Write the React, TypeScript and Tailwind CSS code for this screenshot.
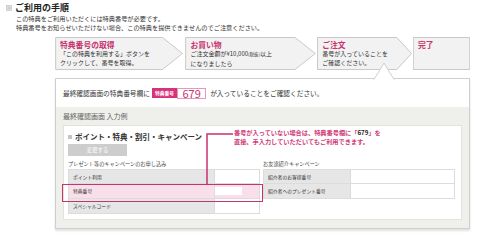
const PINK = "text-[#c8326f]";

function StepShape({ arrow }: { arrow: boolean }) {
  return (
    <svg className="absolute inset-0 w-full h-full" viewBox="0 0 100 33" preserveAspectRatio="none">
      <polygon
        points={arrow ? "0.5,0.5 84,0.5 99.5,16.5 84,32.5 0.5,32.5" : "0.5,0.5 99.5,0.5 99.5,32.5 0.5,32.5"}
        fill="#f2f2f2"
        stroke="#c9c9c9"
        strokeWidth="1"
        vectorEffect="non-scaling-stroke"
      />
    </svg>
  );
}

function Step({ w, title, lines, arrow = true }: { w: string; title: string; lines: React.ReactNode[]; arrow?: boolean }) {
  return (
    <div className={`relative h-[33px] shrink-0 ${w}`}>
      <StepShape arrow={arrow} />
      <div className="relative pl-[5px] pt-[3px]">
        <div className={`text-[7.8px] leading-[9px] font-bold ${PINK}`}>{title}</div>
        {lines.map((l, i) => (
          <div key={i} className="text-[6px] leading-[9px] text-[#333]">
            {l}
          </div>
        ))}
      </div>
    </div>
  );
}

export default function App() {
  return (
    <div
      className="w-[480px] h-[242px] overflow-hidden bg-white text-[#333]"
      style={{ fontFamily: '"Noto Sans CJK JP", "Noto Sans", sans-serif' }}
    >
      <div className="flex items-center gap-[3px] pl-[6px] pt-[2px]">
        <svg width="6" height="6" viewBox="0 0 6 6">
          <rect x="0.5" y="0.5" width="5" height="5" fill="#e6e6e6" stroke="#bbb" strokeWidth="0.6" />
          <line x1="1.5" y1="2.2" x2="4.5" y2="2.2" stroke="#aaa" strokeWidth="0.6" />
          <line x1="1.5" y1="3.8" x2="4.5" y2="3.8" stroke="#aaa" strokeWidth="0.6" />
        </svg>
        <h1 className="text-[9px] leading-[12px] font-bold text-[#222]">ご利用の手順</h1>
      </div>
      <div className="pl-[16px] text-[6.2px] leading-[9px] text-[#333]">
        <p>この特典をご利用いただくには特典番号が必要です。</p>
        <p>特典番号をお知らせいただけない場合、この特典を提供できませんのでご注意ください。</p>
      </div>

      <div className="ml-[55px] mt-[5px] flex w-[415px]">
        <Step w="w-[128px]" title="特典番号の取得" lines={["「この特典を利用する」ボタンを", "クリックして、番号を取得。"]} />
        <div className="w-[3px]" />
        <Step
          w="w-[131px]"
          title="お買い物"
          lines={[
            <span key="a">
              ご注文金額が¥10,000<span className="text-[4.5px]">(税抜)</span>以上
            </span>,
            "になりましたら",
          ]}
        />
        <div className="w-[1px]" />
        <Step w="w-[95px]" title="ご注文" lines={["番号が入っていることを", "ご確認ください。"]} />
        <div className="w-[1px]" />
        <Step w="w-[57px]" title="完了" lines={[]} arrow={false} />
      </div>

      <div className="relative ml-[55px] mt-[8px] w-[415px] border border-[#cfcfcf] shadow-[0_2px_2px_rgba(0,0,0,0.12)]">
        <svg className="absolute left-[317px] top-[-17px]" width="22" height="18" viewBox="0 0 22 18">
          <polygon points="1,17.5 11,1 21,17.5" fill="#ffffff" />
          <polyline points="1,17.5 11,1 21,17.5" fill="none" stroke="#cfcfcf" strokeWidth="1" />
        </svg>
        <div className="flex items-center h-[28px] pl-[7px] bg-white text-[6.7px]">
          <span>最終確認画面の特典番号欄に</span>
          <span className="ml-[2px] h-[10px] px-[3px] flex items-center bg-[#d6337a] text-white text-[4.8px] font-bold">特典番号</span>
          <span className="h-[11px] w-[29px] flex items-center justify-center border border-[#e29ab8] bg-white text-[#c8326f] text-[11px] leading-none">
            679
          </span>
          <span className="ml-[4px]">が入っていることをご確認ください。</span>
        </div>

        <div className="bg-[#efefeb] px-[7px] pb-[8px]">
          <div className="h-[18px] flex items-center text-[7px] text-[#666]">最終確認画面 入力例</div>
          <div className="relative bg-white border border-[#e2e2de] px-[4px] pt-[6px] pb-[5px]">
            <div className="flex items-center gap-[3px] text-[7.5px] leading-[10px] font-bold text-[#333]">
              <span className="w-[4px] h-[4px] bg-[#c4c4c4]" />
              ポイント・特典・割引・キャンペーン
            </div>
            <div className="mt-[2px] w-[59px] h-[12px] bg-[#cdcdcd] text-white text-[5.5px] flex items-center justify-center">
              変更する
            </div>
            <div className="mt-[3px] flex gap-[3px]">
              <div className="w-[192px]">
                <div className="h-[10px] flex items-center text-[5.2px] text-[#444]">プレゼント等のキャンペーンのお申し込み</div>
                <table className="w-full border-collapse text-[4.8px] text-[#333]">
                  <tbody>
                    <tr className="h-[14px]">
                      <td className="w-[146px] bg-[#e6e6e6] border border-[#dcdcdc] pl-[4px]">ポイント利用</td>
                      <td className="bg-white border border-[#dcdcdc]" />
                    </tr>
                    <tr className="h-[15px]">
                      <td className="bg-[#f8dfea] border border-[#dcdcdc] pl-[4px]">特典番号</td>
                      <td className="bg-[#f8dfea] border border-[#dcdcdc]">
                        <div className="w-[27px] h-[8px] bg-white" />
                      </td>
                    </tr>
                    <tr className="h-[15px]">
                      <td className="bg-[#e6e6e6] border border-[#dcdcdc] pl-[4px]">スペシャルコード</td>
                      <td className="bg-white border border-[#dcdcdc]" />
                    </tr>
                  </tbody>
                </table>
              </div>
              <div className="w-[192px]">
                <div className="h-[10px] flex items-center text-[5.2px] text-[#444]">お友達紹介キャンペーン</div>
                <table className="w-full border-collapse text-[4.8px] text-[#333]">
                  <tbody>
                    <tr className="h-[14px]">
                      <td className="w-[87px] bg-[#e6e6e6] border border-[#dcdcdc] pl-[4px]">紹介者のお客様番号</td>
                      <td className="bg-white border border-[#dcdcdc]" />
                    </tr>
                    <tr className="h-[15px]">
                      <td className="bg-[#e6e6e6] border border-[#dcdcdc] pl-[4px]">紹介者へのプレゼント番号</td>
                      <td className="bg-white border border-[#dcdcdc]" />
                    </tr>
                  </tbody>
                </table>
              </div>
            </div>

            {/* highlight + callout */}
            <div className="absolute left-[-2px] top-[58px] w-[201px] h-[18px] border-[1.5px] border-[#c8326f]" />
            <svg className="absolute left-[140px] top-[6px]" width="30" height="53" viewBox="0 0 30 53">
              <polyline points="3,53 3,2 30,2" fill="none" stroke="#c8326f" strokeWidth="1.5" />
            </svg>
            <div className="absolute left-[169px] top-[2px] bg-white pl-[1px] text-[6.2px] leading-[9px] font-bold text-[#d03b78]">
              <p>
                番号が入っていない場合は、特典番号欄に「<span className="text-[#222]">679</span>」を
              </p>
              <p>直接、手入力していただいてもご利用できます。</p>
            </div>
          </div>
        </div>
      </div>
    </div>
  );
}
